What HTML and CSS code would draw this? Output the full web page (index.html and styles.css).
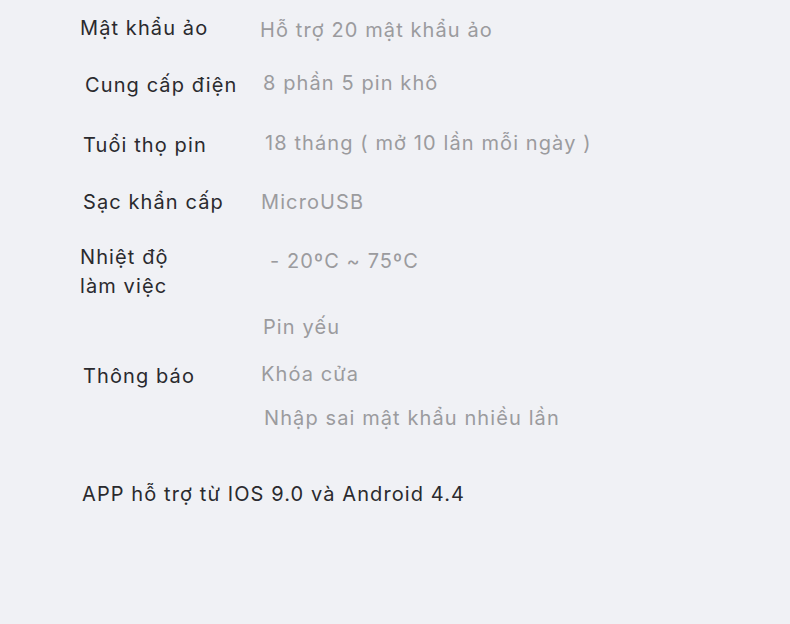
FILE: index.html
```html
<!DOCTYPE html>
<html lang="vi">
<head>
<meta charset="utf-8">
<link rel="stylesheet" href="styles.css">
</head>
<body>
<div class="specs">
  <div class="row r1">
    <div class="label">Mật khẩu ảo</div>
    <div class="value v1">Hỗ trợ 20 mật khẩu ảo</div>
  </div>
  <div class="row r2">
    <div class="label l2">Cung cấp điện</div>
    <div class="value v2">8 phần 5 pin khô</div>
  </div>
  <div class="row r3">
    <div class="label l3">Tuổi thọ pin</div>
    <div class="value v3">18 tháng ( mở 10 lần mỗi ngày )</div>
  </div>
  <div class="row r4">
    <div class="label l4">Sạc khẩn cấp</div>
    <div class="value v4">MicroUSB</div>
  </div>
  <div class="row r5">
    <div class="label">Nhiệt độ<br>làm việc</div>
    <div class="value v5">- 20ºC ~ 75ºC</div>
  </div>
  <div class="row r6">
    <div class="label l6">Thông báo</div>
    <div class="value vlist">
      <div class="v6a">Pin yếu</div>
      <div class="v6b">Khóa cửa</div>
      <div class="v6c">Nhập sai mật khẩu nhiều lần</div>
    </div>
  </div>
  <div class="note">APP hỗ trợ từ IOS 9.0 và Android 4.4</div>
</div>
</body>
</html>
```
FILE: styles.css
```css
html, body {
  margin: 0;
  padding: 0;
  background: #f0f1f5;
}
body {
  font-family: Inter, "Noto Sans", sans-serif;
  font-size: 20px;
  line-height: 29px;
  letter-spacing: 1.1px;
  color: #2a2a2e;
}
.specs {
  padding: 14px 0 0 80px;
}
.row {
  display: grid;
  grid-template-columns: 180px 1fr;
  align-items: start;
}
.value { color: #9b9b9e; }
.v1 { padding-top: 2px; }
.r2 { margin-top: 24px; }
.l2 { padding: 2px 0 0 5px; }
.v2 { padding-left: 3px; }
.r3 { margin-top: 29px; }
.l3 { padding: 2px 0 0 3px; }
.v3 { padding-left: 5px; }
.r4 { margin-top: 28px; }
.l4 { padding-left: 3px; }
.v4 { padding-left: 1px; }
.r5 { margin-top: 26px; }
.v5 { padding: 4px 0 0 10px; }
.r6 { margin-top: 12px; }
.vlist { display: flex; flex-direction: column; }
.v6a { padding-left: 3px; }
.v6b { padding: 18px 0 0 1px; }
.v6c { padding: 15px 0 0 4px; }
.l6 { padding: 49px 0 0 3px; }
.note {
  margin-top: 47px;
  padding-left: 2px;
}
```
